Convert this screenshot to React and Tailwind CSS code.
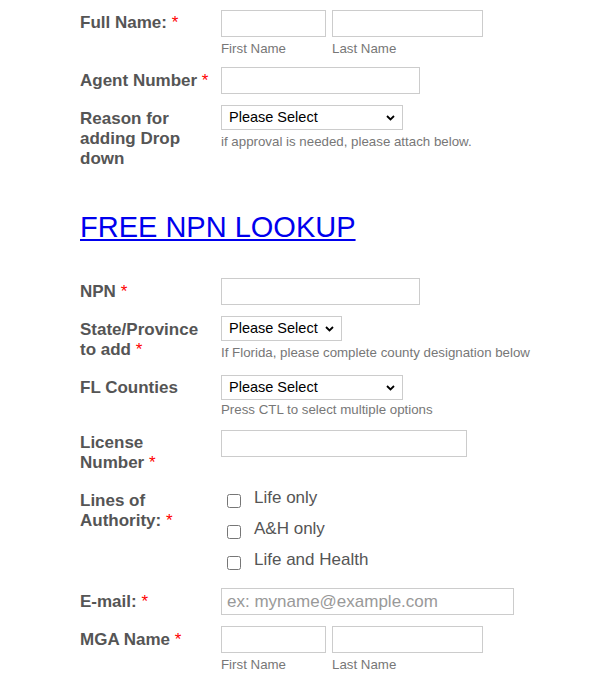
import React from "react";

const Req = () => <span className="font-normal text-[#ff0000]"> *</span>;

function Label({ children, pt = "pt-[4px]" }) {
  return (
    <div className={`w-[130px] mr-[11px] shrink-0 font-bold text-[17px] leading-[20px] text-[#555555] ${pt}`}>
      {children}
    </div>
  );
}

const inputCls =
  "block h-[27px] border border-[#cccccc] bg-white px-[5px] text-[17px] text-[#333] outline-none";

function Select({ w }) {
  return (
    <div className={`relative ${w}`}>
      <select className="block w-full h-[25px] appearance-none border border-[#cccccc] bg-white pl-[7px] text-[14.5px] leading-[23px] text-black outline-none">
        <option>Please Select</option>
      </select>
      <svg
        className="pointer-events-none absolute right-[8px] top-[10px]"
        width="9"
        height="6"
        viewBox="0 0 9 6"
      >
        <path d="M1 1 L4.5 4.5 L8 1" fill="none" stroke="#000" strokeWidth="1.8" />
      </svg>
    </div>
  );
}

function Help({ children, mt = "mt-[4px]" }) {
  return <div className={`${mt} text-[13.3px] leading-[16px] text-[#777777]`}>{children}</div>;
}

function NameFields() {
  return (
    <div className="flex gap-[6px]">
      <div>
        <input className={`${inputCls} w-[105px]`} />
        <Help>First Name</Help>
      </div>
      <div>
        <input className={`${inputCls} w-[151px]`} />
        <Help>Last Name</Help>
      </div>
    </div>
  );
}

function Check({ children }) {
  return (
    <label className="flex items-start h-[20px]">
      <input
        type="checkbox"
        className="ml-[6px] mt-[6px] w-[14px] h-[14px] m-0 shrink-0"
      />
      <span className="ml-[13px] text-[17px] leading-[20px] text-[#555555]">{children}</span>
    </label>
  );
}

export default function App() {
  return (
    <div className="bg-white min-h-[680px] pl-[80px] pt-[10px] pb-[20px] font-['Liberation_Sans',Arial,sans-serif]">
      {/* Full Name */}
      <div className="flex">
        <Label pt="pt-[3px]">
          Full Name:<Req />
        </Label>
        <NameFields />
      </div>

      {/* Agent Number */}
      <div className="flex mt-[10px]">
        <Label>
          Agent Number<Req />
        </Label>
        <input className={`${inputCls} w-[199px]`} />
      </div>

      {/* Reason */}
      <div className="flex mt-[11px]">
        <Label>Reason for adding Drop down</Label>
        <div>
          <Select w="w-[182px]" />
          <Help>if approval is needed, please attach below.</Help>
        </div>
      </div>

      <div className="mt-[41px]">
        <a href="#" className="text-[29px] leading-[34px] text-[#0000ee] underline">
          FREE NPN LOOKUP
        </a>
      </div>

      {/* NPN */}
      <div className="flex mt-[34px]">
        <Label>
          NPN<Req />
        </Label>
        <input className={`${inputCls} w-[199px]`} />
      </div>

      {/* State */}
      <div className="flex mt-[11px]">
        <Label>
          State/Province to add<Req />
        </Label>
        <div>
          <Select w="w-[121px]" />
          <Help>If Florida, please complete county designation below</Help>
        </div>
      </div>

      {/* FL Counties */}
      <div className="flex mt-[14px]">
        <Label pt="pt-[3px]">FL Counties</Label>
        <div>
          <Select w="w-[182px]" />
          <Help mt="mt-[2px]">Press CTL to select multiple options</Help>
        </div>
      </div>

      {/* License */}
      <div className="flex mt-[12px]">
        <Label pt="pt-[3px]">
          License Number<Req />
        </Label>
        <input className={`${inputCls} w-[246px]`} />
      </div>

      {/* Lines of Authority */}
      <div className="flex mt-[15px]">
        <Label pt="pt-[3px]">
          Lines of Authority:<Req />
        </Label>
        <div className="flex flex-col gap-[11px]">
          <Check>Life only</Check>
          <Check>A&amp;H only</Check>
          <Check>Life and Health</Check>
        </div>
      </div>

      {/* Email */}
      <div className="flex mt-[18px]">
        <Label>
          E-mail:<Req />
        </Label>
        <input
          className={`${inputCls} w-[293px] placeholder:text-[#999999]`}
          placeholder="ex: myname@example.com"
        />
      </div>

      {/* MGA Name */}
      <div className="flex mt-[11px]">
        <Label>
          MGA Name<Req />
        </Label>
        <NameFields />
      </div>
    </div>
  );
}
